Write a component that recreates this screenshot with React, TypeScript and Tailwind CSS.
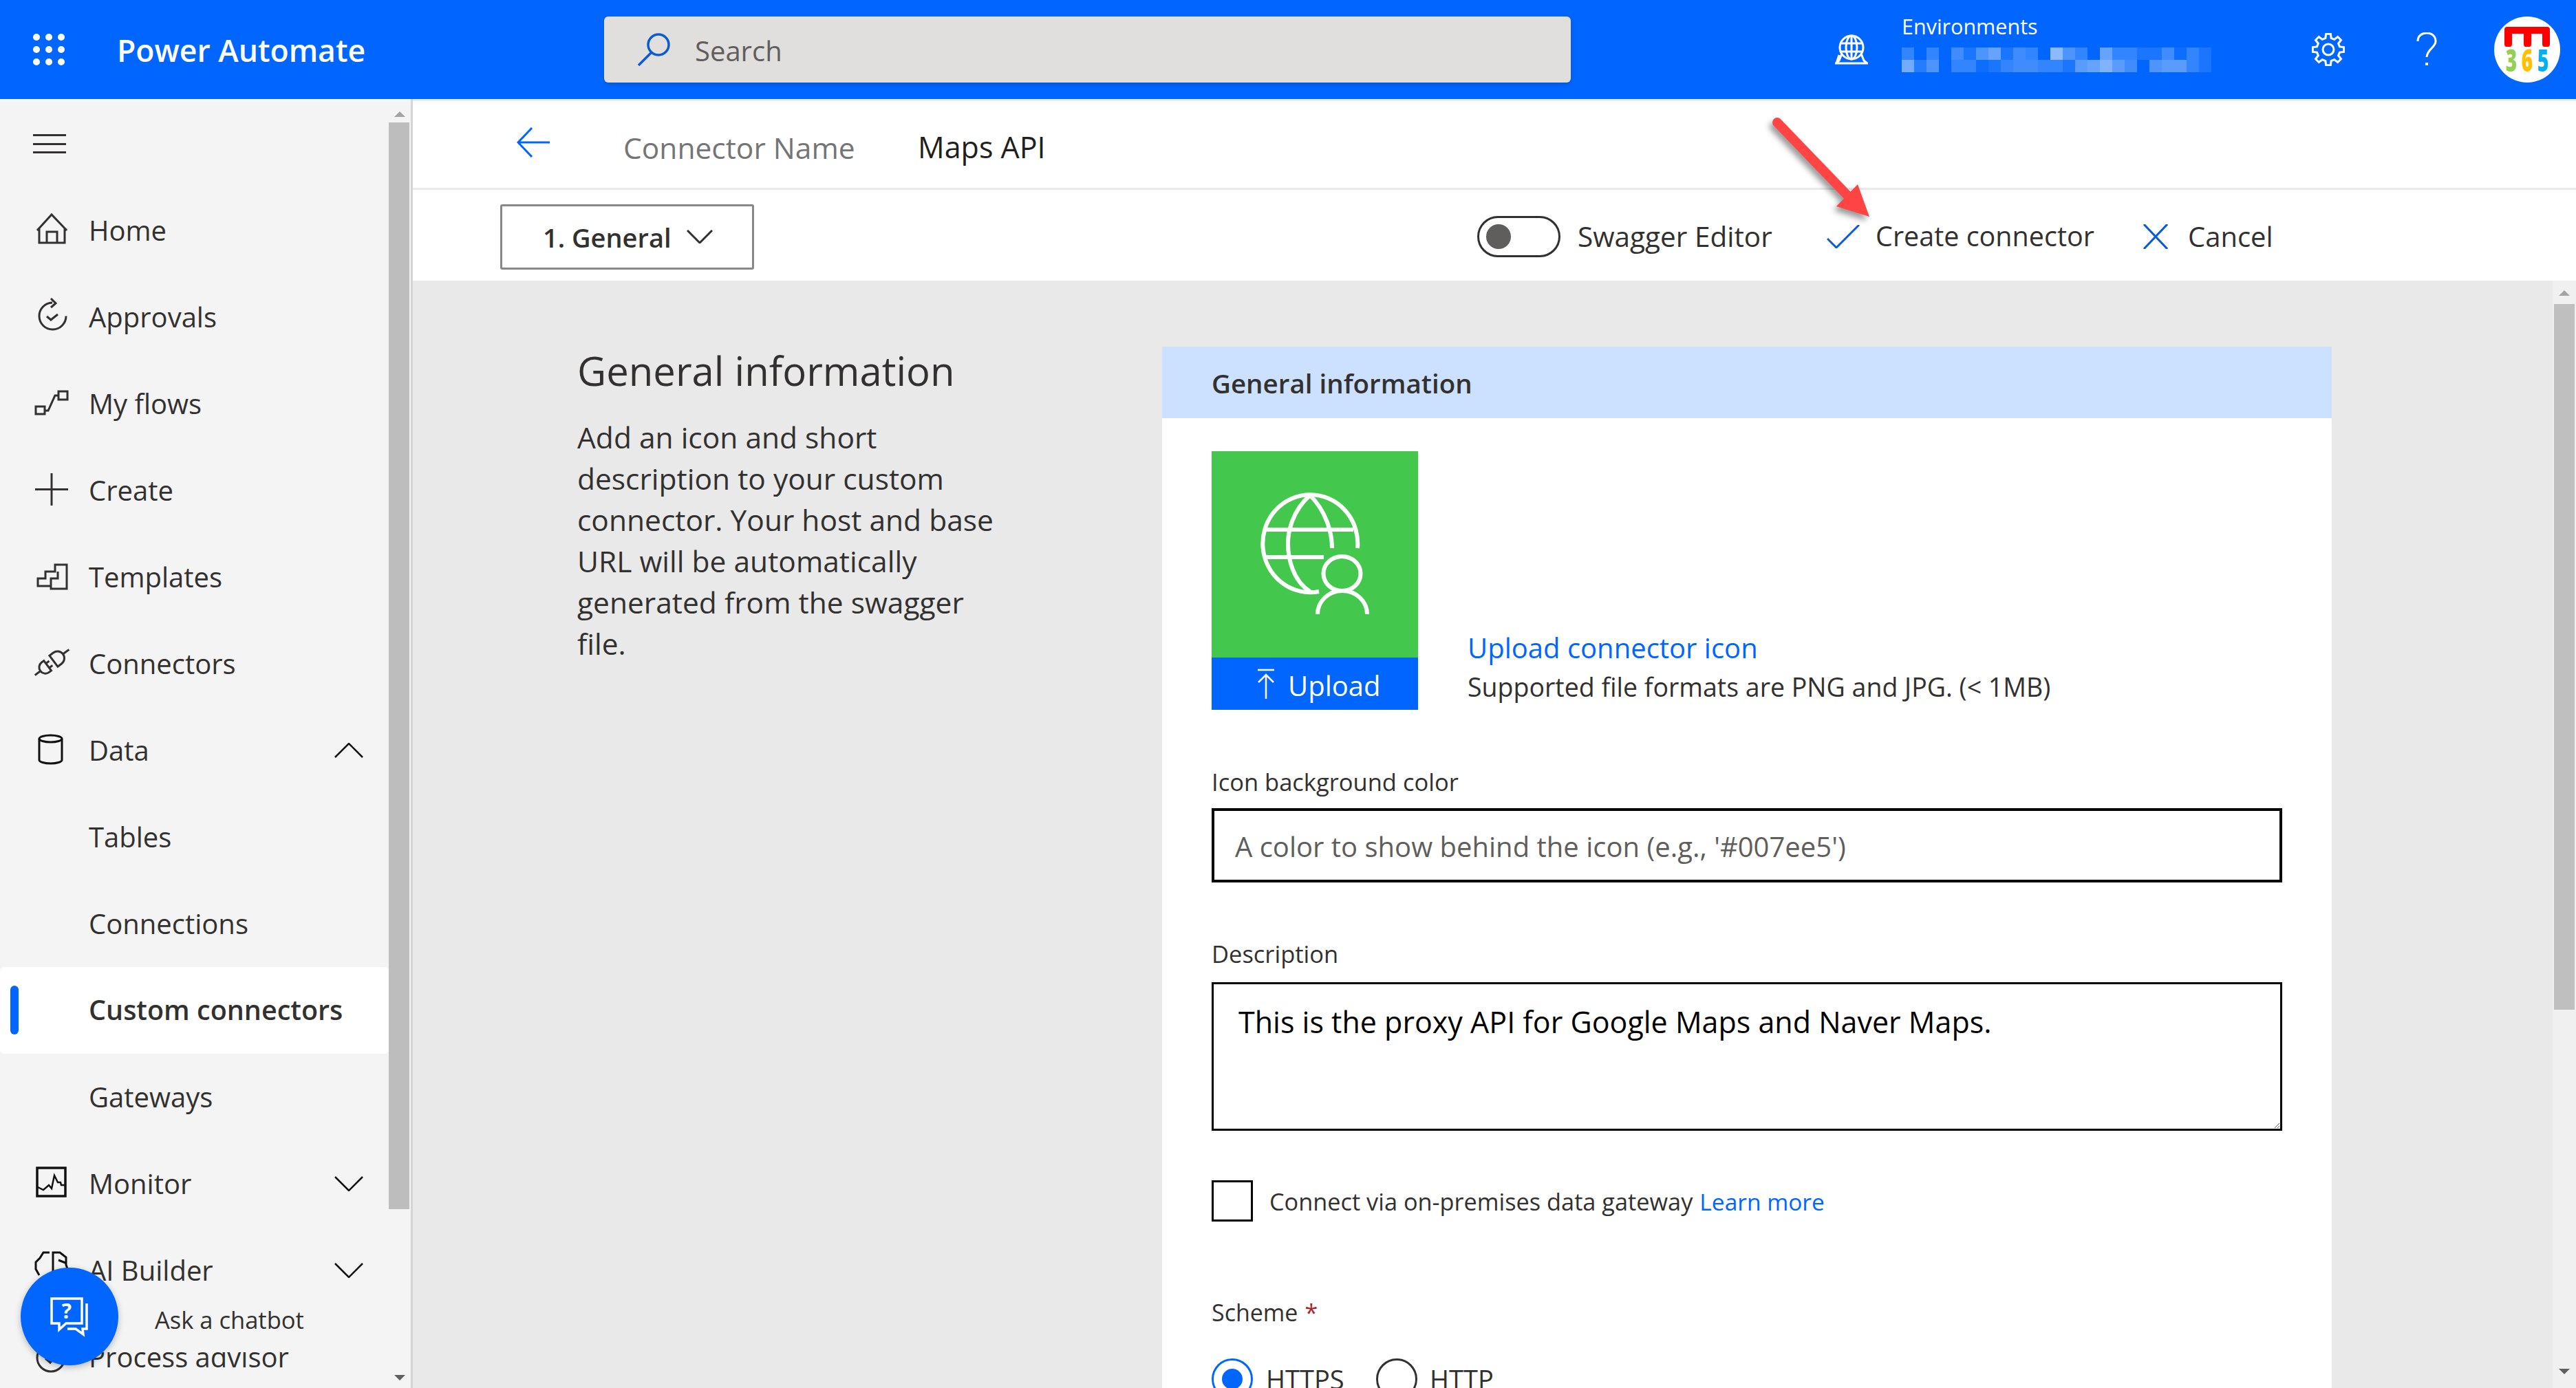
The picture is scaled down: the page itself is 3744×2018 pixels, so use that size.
import React from "react";

const blurA = [.2,0,.2,0,.25,.1,.3,.4,.1,.25,.2,0,.55,.3,.2,0,.4,.2,.2,.1,.1,.25,.05,.2,.1,0];
const blurB = [.45,.15,.3,0,.2,.2,.05,.1,.2,.25,.25,.2,.2,.1,.35,.4,.5,.35,.25,0,.3,.35,.35,.2,.1,0];

const gearPath = (() => {
  const n = 8, cx = 24, cy = 24, ro = 23, ri = 17;
  const pts: string[] = [];
  for (let i = 0; i < n; i++) {
    const a = (i * 2 * Math.PI) / n;
    const s = Math.PI / n;
    [[ri, -s * 0.62], [ro, -s * 0.38], [ro, s * 0.38], [ri, s * 0.62]].forEach(([r, d]) => {
      pts.push(`${(cx + r * Math.sin(a + d)).toFixed(1)} ${(cy - r * Math.cos(a + d)).toFixed(1)}`);
    });
  }
  return "M" + pts.join(" L") + " Z";
})();

const Ico = ({ children, cls = "text-[#323130]", sw = 3 }: { children: React.ReactNode; cls?: string; sw?: number }) => (
  <svg width="48" height="48" viewBox="0 0 48 48" fill="none" stroke="currentColor" strokeWidth={sw} className={`overflow-visible ${cls}`}>
    {children}
  </svg>
);

const icons: Record<string, React.ReactNode> = {
  home: <Ico><path d="M3 24 L24 1 L46 24 M6 21 V42 H43 V21 M17 42 V26 H32 V42" /></Ico>,
  approvals: <Ico><path d="M25 3 A19.5 19.5 0 1 0 45 22.5 M23 -3 L30 4 L23 10 M17 23 L23 28 L33 20" /></Ico>,
  flows: <Ico><path d="M1 28 H14 V39 H1 Z M34 6 H47 V18 H34 Z M14 34 H19 L29 12 H34" /></Ico>,
  create: <Ico><path d="M0 22.5 H48 M24 -1 V46" /></Ico>,
  templates: <Ico><path d="M4 26 H15 V16 H29 V6 H46 V41 H23 V37 H4 Z M23 37 V26 H33 V16" /></Ico>,
  connectors: (
    <Ico>
      <g transform="translate(24.5 22) rotate(-37)">
        <path d="M-31 0 H-20 M-8 -9 H-12 A9 9 0 0 0 -12 9 H-8 Z M-8 -4 H-2 M-8 4 H-2 M3 -10 V10 H10 A10 10 0 0 0 10 -10 Z M20 0 H31" />
      </g>
    </Ico>
  ),
  data: <Ico cls="text-[#111111]"><ellipse cx="22.5" cy="7" rx="16.5" ry="5" /><path d="M6 7 V38 A16.5 5 0 0 0 39 38 V7" /></Ico>,
  monitor: <Ico cls="text-[#111111]" sw={3.5}><path d="M3 1 H44 V42 H3 Z" /><path d="M4 29 L12 33 L20 26 L24 31 L28 12 L33 22 H37 L38 26 H44" strokeWidth={2.5} /></Ico>,
  ai: <Ico cls="text-[#111111]"><path d="M21 -2 H12 L7 6 L1 12 V22 L6 31 M26 31 V-2 H36 L45 5 V16 L48 24 M34 9 L44 13" /></Ico>,
  process: <Ico><circle cx="23" cy="25" r="20" /><path d="M15 26 L22 32 L32 20" /></Ico>,
};

const Chevron = ({ up = false }: { up?: boolean }) => (
  <svg width="42" height="22" viewBox="0 0 42 22" fill="none" stroke="#111111" strokeWidth="2.5" className="absolute left-[486px]">
    <path d={up ? "M1 21 L21 1 L41 21" : "M1 1 L21 21 L41 1"} />
  </svg>
);

const NavRow = ({ label, icon, chev, active }: { label: string; icon?: string; chev?: "up" | "down"; active?: boolean }) => (
  <div className={`relative flex h-[126px] shrink-0 items-center rounded-[6px] text-[#323130] ${active ? "bg-white text-[39.5px] font-semibold" : "text-[40px]"}`}>
    {active && <div className="absolute left-[15px] top-[27px] h-[71px] w-[12px] rounded-[6px] bg-[#0066ff]" />}
    <div className="flex w-[129px] shrink-0 pl-[51px]">{icon && icons[icon]}</div>
    <span>{label}</span>
    {chev && <Chevron up={chev === "up"} />}
  </div>
);

const Tri = ({ down = false }: { down?: boolean }) => (
  <div className={`h-0 w-0 border-x-[8px] border-x-transparent ${down ? "border-t-[8px] border-t-[#5f5f5f]" : "border-b-[8px] border-b-[#a3a3a3]"}`} />
);

const Digit = ({ x, c, d }: { x: number; c: string; d: string }) => (
  <text transform={`translate(${x} 80) scale(0.78 1.25)`} textAnchor="middle" fontSize="36" fontWeight="800" fill={c} fontFamily="Open Sans, sans-serif">{d}</text>
);

export default function App() {
  return (
    <div className="relative flex h-[2018px] w-[3744px] flex-col overflow-hidden bg-white font-['Open_Sans',sans-serif] text-[#323130]">
      {/* Header */}
      <header className="flex h-[144px] shrink-0 items-center bg-[#0066ff] text-white">
        <div className="w-[170px] shrink-0 pl-[48px]">
          <div className="grid w-[46px] grid-cols-3 gap-x-[8px] gap-y-[8px]">
            {Array.from({ length: 9 }).map((_, i) => (
              <div key={i} className="h-[10px] w-[10px] rounded-full bg-white" />
            ))}
          </div>
        </div>
        <div className="mt-[3px] w-[708px] shrink-0 text-[44.5px] font-semibold leading-none">Power Automate</div>
        <div className="flex h-[96px] w-[1405px] shrink-0 items-center rounded-[6px] bg-[#e1dfdd] pl-[48px] shadow-[0_3px_6px_rgba(0,0,0,0.15)]">
          <svg width="48" height="48" viewBox="0 0 48 48" fill="none" stroke="#0b5bd3" strokeWidth="3.5" className="shrink-0">
            <circle cx="31" cy="17" r="15" />
            <path d="M21 28 L2 47" />
          </svg>
          <span className="ml-[36px] mt-[3px] text-[40px] text-[#605e5c]">Search</span>
        </div>
        <div className="ml-[384px] flex w-[97px] shrink-0">
          <svg width="48" height="44" viewBox="0 0 48 44" fill="none" stroke="white" strokeWidth="3">
            <circle cx="24" cy="19" r="17" />
            <ellipse cx="24" cy="19" rx="8" ry="17" />
            <path d="M7 13 H41 M7 25 H41 M24 2 V36 M10 28 L6 38 L1 42 H47 L42 38 L38 28 M2 42 L6 30" />
          </svg>
        </div>
        <div className="flex h-[96px] w-[596px] shrink-0 flex-col">
          <div className="flex h-[28px] items-center text-[30.5px] leading-none">Environments</div>
          <div className="mt-[17px] grid w-[468px] grid-cols-[repeat(26,18px)] grid-rows-[18px_18px]">
            {[...blurA, ...blurB].map((o, i) => (
              <div key={i} className="bg-white" style={{ opacity: o }} />
            ))}
          </div>
        </div>
        <div className="w-[152px] shrink-0">
          <svg width="48" height="48" viewBox="0 0 48 48" fill="none" stroke="white" strokeWidth="3">
            <path d={gearPath} />
            <circle cx="24" cy="24" r="8" />
          </svg>
        </div>
        <div className="w-[113px] shrink-0">
          <svg width="30" height="50" viewBox="0 0 30 50" fill="none" stroke="white" strokeWidth="3">
            <path d="M2 13 C2 5 8 1 15 1 C23 1 28 6 28 13 C28 22 16 24 15 36" />
            <path d="M15 44 V48" strokeWidth="4" />
          </svg>
        </div>
        <div className="h-[96px] w-[96px] shrink-0 rounded-full bg-white">
          <svg width="96" height="96" viewBox="0 0 96 96">
            <path d="M15 19 Q15 15 19 15 H77 Q81 15 81 19 V40 Q81 44 78 44 H73 Q70 44 70 40 V25 H54 V40 Q54 44 51 44 H46 Q43 44 43 40 V25 H26 V40 Q26 44 23 44 H18 Q15 44 15 40 Z" fill="#ff0000" />
            <Digit x={25} c="#92d050" d="3" />
            <Digit x={48} c="#ffc000" d="6" />
            <Digit x={71} c="#00b0f0" d="5" />
          </svg>
        </div>
      </header>

      {/* Body */}
      <div className="flex min-h-0 flex-1">
        {/* Sidebar */}
        <aside className="flex w-[600px] shrink-0 border-r-[3px] border-[#d4d4d4] bg-[#f4f4f4]">
          <nav className="flex w-[565px] shrink-0 flex-col overflow-hidden">
            <div className="flex h-[128px] shrink-0 pl-[48px] pt-[51px]">
              <div className="flex h-[28px] w-[48px] flex-col justify-between">
                <div className="h-[3px] bg-[#323130]" />
                <div className="h-[3px] bg-[#323130]" />
                <div className="h-[3px] bg-[#323130]" />
              </div>
            </div>
            <NavRow label="Home" icon="home" />
            <NavRow label="Approvals" icon="approvals" />
            <NavRow label="My flows" icon="flows" />
            <NavRow label="Create" icon="create" />
            <NavRow label="Templates" icon="templates" />
            <NavRow label="Connectors" icon="connectors" />
            <NavRow label="Data" icon="data" chev="up" />
            <NavRow label="Tables" />
            <NavRow label="Connections" />
            <NavRow label="Custom connectors" active />
            <NavRow label="Gateways" />
            <NavRow label="Monitor" icon="monitor" chev="down" />
            <NavRow label="AI Builder" icon="ai" chev="down" />
            <NavRow label="Process advisor" icon="process" />
          </nav>
          <div className="flex w-[32px] shrink-0 flex-col items-center">
            <div className="flex h-[34px] w-full items-end justify-center pb-[8px]"><Tri /></div>
            <div className="h-[1580px] w-[30px] self-start bg-[#bdbdbd]" />
            <div className="flex flex-1 items-end justify-center pb-[11px]"><Tri down /></div>
          </div>
        </aside>

        {/* Main */}
        <main className="flex min-w-0 flex-1 flex-col border-t-[3px] border-[#e9e9e9]">
          <div className="flex h-[129px] shrink-0 items-center border-b-[3px] border-[#e9e9e9] pl-[151px]">
            <svg width="48" height="44" viewBox="0 0 48 44" fill="none" stroke="#0066ff" strokeWidth="3" className="-mt-[6px] shrink-0">
              <path d="M22 1 L2 22 L22 43 M2 22 H48" />
            </svg>
            <span className="ml-[107px] mt-[9px] w-[428px] text-[42.5px] text-[#757575]">Connector Name</span>
            <span className="mt-[9px] text-[43px] text-[#201f1e]">Maps API</span>
          </div>
          <div className="flex h-[132px] shrink-0 items-center pl-[127px] pr-[429px] pt-[4px]">
            <div className="flex h-[95px] w-[369px] items-center rounded-[3px] border-[3px] border-[#8a8886] pl-[59px] text-[38px] font-semibold">
              <span className="mt-[3px] w-[209px]">1. General</span>
              <svg width="38" height="20" viewBox="0 0 38 20" fill="none" stroke="#323130" strokeWidth="3"><path d="M1 1 L19 19 L37 1" /></svg>
            </div>
            <div className="ml-auto flex w-[508px] items-center">
              <div className="flex h-[60px] w-[121px] shrink-0 items-center rounded-full border-[3px] border-[#323130] pl-[10px]">
                <div className="h-[36px] w-[36px] rounded-full bg-[#605e5c]" />
              </div>
              <span className="ml-[25px] text-[40.5px]">Swagger Editor</span>
            </div>
            <div className="flex w-[460px] items-center">
              <svg width="48" height="34" viewBox="0 0 48 34" fill="none" stroke="#0b5bd3" strokeWidth="3" className="shrink-0">
                <path d="M1 20 L14 33 L47 0" />
              </svg>
              <span className="ml-[23px] text-[39.5px]">Create connector</span>
            </div>
            <div className="flex w-[200px] items-center">
              <svg width="36" height="36" viewBox="0 0 36 36" fill="none" stroke="#0b5bd3" strokeWidth="3" className="shrink-0">
                <path d="M1 0 L35 36 M35 0 L1 36" />
              </svg>
              <span className="ml-[29px] text-[40px]">Cancel</span>
            </div>
          </div>

          <div className="flex min-h-0 flex-1 bg-[#e9e9e9]">
            <div className="w-[1089px] shrink-0 pl-[239px] pt-[90px]">
              <h2 className="flex h-[80px] items-center text-[58px]">General information</h2>
              <p className="mt-[28px] text-[42.5px] leading-[60px]">
                Add an icon and short<br />
                description to your custom<br />
                connector. Your host and base<br />
                URL will be automatically<br />
                generated from the swagger<br />
                file.
              </p>
            </div>
            <div className="w-[2021px] shrink-0 pt-[96px]">
              <section className="h-[1600px] w-[1700px] bg-white">
                <div className="flex h-[104px] items-center bg-[#cce0ff] pl-[72px] pt-[3px] text-[38.5px] font-semibold">General information</div>
                <div className="px-[72px] pt-[48px]">
                  <div className="flex h-[376px]">
                    <div className="flex w-[300px] shrink-0 flex-col">
                      <div className="h-[300px] bg-[#43c84d]">
                        <svg width="300" height="300" viewBox="0 0 300 300" fill="none" stroke="white" strokeWidth="6">
                          <g transform="translate(0 6)">
                            <path d="M156 198 A69 71 0 1 1 212 135" />
                            <path d="M143 58 C118 80 111 110 111 128 C111 150 118 182 143 198 M143 58 C165 80 175 110 175 135 M80 108 H206 M76 148 H163" />
                            <ellipse cx="189.5" cy="172" rx="27" ry="25" />
                            <path d="M154 231 C154 212 170 197 190 197 C210 197 226 212 226 231" />
                          </g>
                        </svg>
                      </div>
                      <div className="flex h-[76px] items-center bg-[#0066ff] pl-[66px] text-[40px] text-white">
                        <svg width="26" height="44" viewBox="0 0 26 44" fill="none" stroke="white" strokeWidth="2.5" className="shrink-0">
                          <path d="M1 2 H25 M13 44 V9 M2 20 L13 9 L24 20" />
                        </svg>
                        <span className="ml-[19px] mt-[6px]">Upload</span>
                      </div>
                    </div>
                    <div className="ml-[72px] flex flex-col justify-end pb-[6px]">
                      <div className="text-[40px] leading-[60px] text-[#0066ff]">Upload connector icon</div>
                      <div className="text-[37.5px] leading-[54px]">Supported file formats are PNG and JPG. (&lt; 1MB)</div>
                    </div>
                  </div>

                  <div className="mt-[81px] flex h-[48px] items-center text-[34.5px]">Icon background color</div>
                  <div className="mt-[14px] flex h-[108px] items-center border-[4px] border-black pl-[30px] pt-[3px] text-[40px] text-[#605e5c]">
                    A color to show behind the icon (e.g., '#007ee5')
                  </div>

                  <div className="mt-[80px] flex h-[48px] items-center text-[34.5px]">Description</div>
                  <textarea
                    readOnly
                    className="mt-[17px] block h-[216px] w-full border-[3px] border-black py-[25px] pl-[36px] text-[43px] leading-[60px] text-black outline-none"
                    defaultValue="This is the proxy API for Google Maps and Naver Maps."
                  />

                  <div className="mt-[72px] flex h-[60px] items-center">
                    <div className="h-[60px] w-[60px] shrink-0 border-[3px] border-black" />
                    <span className="ml-[24px] mt-[2px] text-[34.3px]">Connect via on-premises data gateway</span>
                    <span className="ml-[10px] mt-[2px] text-[33.5px] text-[#0066ff]">Learn more</span>
                  </div>

                  <div className="mt-[108px] flex h-[48px] items-center text-[34px]">
                    Scheme<span className="ml-[10px] text-[#a4262c]">*</span>
                  </div>

                  <div className="mt-[43px] flex h-[60px] items-center text-[38px]">
                    <div className="flex h-[60px] w-[60px] shrink-0 items-center justify-center rounded-full border-[3px] border-[#0066ff]">
                      <div className="h-[30px] w-[30px] rounded-full bg-[#0066ff]" />
                    </div>
                    <span className="ml-[19px] w-[160px]">HTTPS</span>
                    <div className="h-[60px] w-[60px] shrink-0 rounded-full border-[3px] border-[#323130]" />
                    <span className="ml-[18px]">HTTP</span>
                  </div>
                </div>
              </section>
            </div>
          </div>
        </main>
      </div>

      {/* Content scrollbar */}
      <div className="absolute bottom-0 right-0 top-[408px] flex w-[34px] flex-col items-center bg-[#f0f0f0]">
        <div className="flex h-[34px] w-full items-center justify-center pt-[2px]"><Tri /></div>
        <div className="h-[1026px] w-[30px] bg-[#bfbfbf]" />
        <div className="flex flex-1 items-end justify-center pb-[20px]"><Tri down /></div>
      </div>

      {/* Red annotation arrow */}
      <svg width="180" height="180" viewBox="0 0 180 180" className="absolute left-[2560px] top-[160px] overflow-visible drop-shadow-[-4px_6px_4px_rgba(0,0,0,0.4)]">
        <path d="M23 18 L125 124" stroke="#ff4444" strokeWidth="14" strokeLinecap="round" fill="none" />
        <path d="M157 155 L109 140 L140 108 Z" fill="#ff4444" />
      </svg>

      {/* Chatbot */}
      <div className="absolute left-[100px] top-[1875px] flex h-[91px] w-[380px] items-center rounded-r-[40px] bg-[#f4f4f4] pb-[4px] pl-[125px] text-[34.5px] text-[#323130]">
        Ask a chatbot
      </div>
      <div className="absolute left-[30px] top-[1843px] flex h-[142px] w-[142px] items-center justify-center rounded-full bg-[#0066ff] shadow-[0_3px_10px_rgba(0,0,0,0.25)]">
        <svg width="54" height="54" viewBox="0 0 54 54" fill="none" stroke="white" strokeWidth="3.5" className="overflow-visible">
          <path d="M1 1 H45 V37 H22 L12 46 V37 H1 Z" />
          <path d="M52 8 V45 H46 L47 53 L36 45 H24" />
          <text x="23" y="30" textAnchor="middle" fontSize="30" fontWeight="700" fill="white" stroke="none" fontFamily="Open Sans, sans-serif">?</text>
        </svg>
      </div>
    </div>
  );
}
